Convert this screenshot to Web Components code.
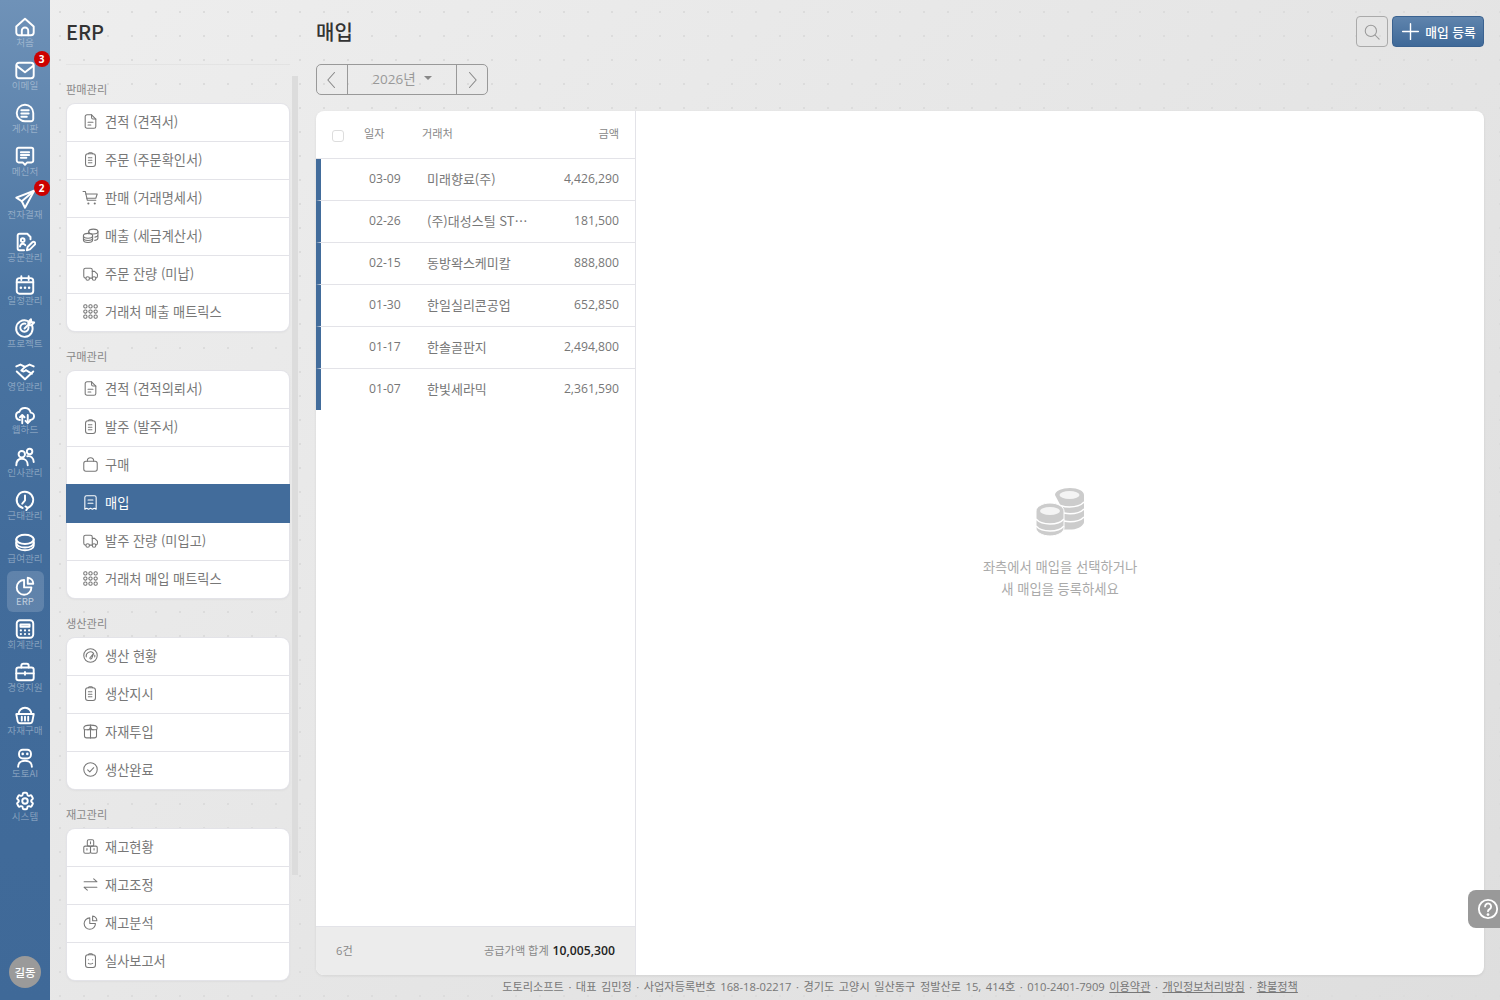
<!DOCTYPE html>
<html lang="ko">
<head>
<meta charset="utf-8">
<title>ERP 매입</title>
<style>
  html, body { margin: 0; height: 100%; overflow: hidden; }
  body {
    font-family: "Open Sans", "Noto Sans CJK KR", sans-serif;
    color: #777;
    background:
      radial-gradient(circle at 12px 12px, #dcdcdc 1px, transparent 1.5px) 0 0 / 24px 24px,
      linear-gradient(135deg, #eeeeee, #dedede);
  }
</style>
</head>
<body>
<erp-app>
  <nav-rail slot="rail">
    <rail-item icon="home" label="처음"></rail-item>
    <rail-item icon="mail" label="이메일" badge="3"></rail-item>
    <rail-item icon="board" label="게시판"></rail-item>
    <rail-item icon="msg" label="메신저"></rail-item>
    <rail-item icon="plane" label="전자결재" badge="2"></rail-item>
    <rail-item icon="docedit" label="공문관리"></rail-item>
    <rail-item icon="calendar" label="일정관리"></rail-item>
    <rail-item icon="target" label="프로젝트"></rail-item>
    <rail-item icon="handshake" label="영업관리"></rail-item>
    <rail-item icon="cloud" label="웹하드"></rail-item>
    <rail-item icon="users" label="인사관리"></rail-item>
    <rail-item icon="clock" label="근태관리"></rail-item>
    <rail-item icon="payroll" label="급여관리"></rail-item>
    <rail-item icon="pie" label="ERP" active></rail-item>
    <rail-item icon="calc" label="회계관리"></rail-item>
    <rail-item icon="briefcase" label="경영지원"></rail-item>
    <rail-item icon="basket" label="자재구매"></rail-item>
    <rail-item icon="robot" label="도토AI"></rail-item>
    <rail-item icon="gear" label="시스템"></rail-item>
  </nav-rail>

  <side-panel slot="panel" heading="ERP">
    <menu-group label="판매관리">
      <menu-item icon="doc">견적 (견적서)</menu-item>
      <menu-item icon="clip">주문 (주문확인서)</menu-item>
      <menu-item icon="cart">판매 (거래명세서)</menu-item>
      <menu-item icon="coins">매출 (세금계산서)</menu-item>
      <menu-item icon="truck">주문 잔량 (미납)</menu-item>
      <menu-item icon="grid">거래처 매출 매트릭스</menu-item>
    </menu-group>
    <menu-group label="구매관리">
      <menu-item icon="doc">견적 (견적의뢰서)</menu-item>
      <menu-item icon="clip">발주 (발주서)</menu-item>
      <menu-item icon="bag">구매</menu-item>
      <menu-item icon="receipt" active>매입</menu-item>
      <menu-item icon="truck">발주 잔량 (미입고)</menu-item>
      <menu-item icon="grid">거래처 매입 매트릭스</menu-item>
    </menu-group>
    <menu-group label="생산관리">
      <menu-item icon="gauge">생산 현황</menu-item>
      <menu-item icon="clip">생산지시</menu-item>
      <menu-item icon="box">자재투입</menu-item>
      <menu-item icon="check">생산완료</menu-item>
    </menu-group>
    <menu-group label="재고관리">
      <menu-item icon="stock">재고현황</menu-item>
      <menu-item icon="swap">재고조정</menu-item>
      <menu-item icon="pie">재고분석</menu-item>
      <menu-item icon="audit">실사보고서</menu-item>
    </menu-group>
  </side-panel>

  <page-head slot="main" heading="매입" action="매입 등록"></page-head>
  <year-nav slot="main" year="2026년"></year-nav>
  <split-view slot="main">
    <purchase-list slot="list" count="6건" total="10,005,300">
      <purchase-row date="03-09" name="미래향료(주)" amount="4,426,290"></purchase-row>
      <purchase-row date="02-26" name="(주)대성스틸 ST⋯" amount="181,500"></purchase-row>
      <purchase-row date="02-15" name="동방왁스케미칼" amount="888,800"></purchase-row>
      <purchase-row date="01-30" name="한일실리콘공업" amount="652,850"></purchase-row>
      <purchase-row date="01-17" name="한솔골판지" amount="2,494,800"></purchase-row>
      <purchase-row date="01-07" name="한빛세라믹" amount="2,361,590"></purchase-row>
    </purchase-list>
    <empty-detail slot="detail">좌측에서 매입을 선택하거나<br>새 매입을 등록하세요</empty-detail>
  </split-view>
  <site-footer slot="main"></site-footer>
  <help-tab slot="main"></help-tab>
</erp-app>

<script>
const ICONS = {
  home: '<path d="M2.500 11.500 12 3l9.500 8.500V18a3 3 0 0 1-3 3h-13a3 3 0 0 1-3-3z"/><path d="M8.500 21v-5a3.500 3.500 0 0 1 7 0v5"/>',
  mail: '<rect x="2.500" y="4" width="19" height="17" rx="3"/><path d="M3 7.500 12 14.500l9-7"/>',
  board: '<path d="M12 3a9 9 0 1 0 0 18h6.500a2.500 2.500 0 0 0 2.500-2.500V12a9 9 0 0 0-9-9z"/><path d="M8 9h8M8 12.500h8M8 16h6"/>',
  msg: '<path d="M5 3h14a2 2 0 0 1 2 2v12a2 2 0 0 1-2 2h-4.500L12 21.500 9.500 19H5a2 2 0 0 1-2-2V5a2 2 0 0 1 2-2z"/><path d="M7.500 8h9M7.500 11h9M7.500 14h6"/>',
  plane: '<path d="M22 3 2.500 10.500l6 4 3.500 7z"/><path d="M22 3 8.500 14.500"/>',
  docedit: '<path d="M18 9V6.500L14.500 3H6a2 2 0 0 0-2 2v14a2 2 0 0 0 2 2h5"/><circle cx="9.500" cy="10" r="2"/><path d="M6.500 17c.5-2 1.800-3 3-3 1 0 2 .5 2.800 1.500"/><path d="m14 21 .8-3.500 5.200-5.200a1.800 1.800 0 0 1 2.600 2.600l-5.200 5.200z"/>',
  calendar: '<rect x="3" y="4.500" width="18" height="17" rx="3"/><path d="M8 2.500v4M16 2.500v4M3 9h18"/><path d="M7.500 15h.01M12 15h.01M16.500 15h.01" stroke-width="2.800"/>',
  target: '<path d="M19.800 9.500A9 9 0 1 1 14.500 4.200"/><path d="M15.800 11a4.500 4.500 0 1 1-3.300-3.700"/><path d="m11.500 12.500 7-7M15.500 5.500 18.500 2.500l.5 3 3 .5-3 3h-3z"/>',
  handshake: '<path d="M2.500 7 7 5l5 2.500L17 5l4.500 2"/><path d="M12 7.500 8 11.500c1.800 1.500 3.500 1 5-.5l6.500 4"/><path d="M3 12.500 12 21l9-8.500"/>',
  cloud: '<path d="M6.500 18.500A4.500 4.500 0 0 1 5.800 9.600 6.500 6.500 0 0 1 18.200 10.500a4 4 0 0 1-.7 8"/><path d="M9 22v-9M6.500 15.500 9 13l2.500 2.500M15 13v9M12.500 19.500 15 22l2.500-2.500"/>',
  users: '<circle cx="8.500" cy="9" r="3.500"/><circle cx="17" cy="6" r="3"/><path d="M2.500 21c0-4.500 2.500-7 6-7s6.500 2.500 6.500 7"/><path d="M14.500 11.200c3.800-.7 7 1.800 7 6.300"/>',
  clock: '<path d="M9.500 20.700A9 9 0 1 1 15 20.500"/><path d="M12 7v5.500L9 16"/><path d="m12.500 19 2.500 1.500-1.500 2.500"/>',
  payroll: '<ellipse cx="12" cy="8" rx="9.500" ry="5"/><path d="M2.500 8v7c0 2.800 4.300 5 9.500 5s9.500-2.200 9.500-5V8"/><path d="M2.500 12c0 2.800 4.300 5 9.500 5s9.500-2.200 9.500-5"/>',
  pie: '<path d="M11 5.500a8 8 0 1 0 8 8h-8z"/><path d="M15 3a6.500 6.500 0 0 1 6 6.500h-6z"/>',
  calc: '<rect x="3" y="2.500" width="18" height="19" rx="3.500"/><path d="M7 7h10v2.500H7z"/><path d="M7.500 13.500h.01M12 13.500h.01M16.500 13.500h.01M7.500 17.500h.01M12 17.500h.01M16.500 17.500h.01" stroke-width="2.400"/>',
  briefcase: '<rect x="2.500" y="7" width="19" height="14" rx="2.500"/><path d="M8 7V5a2 2 0 0 1 2-2h4a2 2 0 0 1 2 2v2M2.500 13.500h19M12 12v3"/>',
  basket: '<path d="M5 11a7 7 0 0 1 14 0"/><path d="M2.500 11h19l-1.500 8a2.500 2.500 0 0 1-2.500 2h-11A2.500 2.500 0 0 1 4 19z"/><path d="M8.500 14v4M12 14v4M15.500 14v4"/>',
  robot: '<rect x="5.500" y="3" width="13" height="9.500" rx="4"/><path d="M9.500 7.500h.01M14.500 7.500h.01" stroke-width="2.800"/><path d="M4.500 21.500c0-4 3.200-6.500 7.500-6.500s7.500 2.500 7.500 6.500"/>',
  gear: '<path d="M9.594 3.940c.09-.542.56-.94 1.110-.94h2.593c.55 0 1.020.398 1.110.94l.213 1.281c.063.374.313.686.645.870.074.040.147.083.22.127.325.196.72.257 1.075.124l1.217-.456a1.125 1.125 0 0 1 1.370.49l1.296 2.247a1.125 1.125 0 0 1-.26 1.431l-1.003.827c-.293.241-.438.613-.43.992a7.723 7.723 0 0 1 0 .255c-.008.378.137.75.43.991l1.004.827c.424.35.534.955.26 1.430l-1.298 2.247a1.125 1.125 0 0 1-1.369.491l-1.217-.456c-.355-.133-.75-.072-1.076.124a6.470 6.470 0 0 1-.22.128c-.331.183-.581.495-.644.869l-.213 1.281c-.09.543-.56.94-1.110.94h-2.594c-.55 0-1.019-.398-1.110-.94l-.213-1.281c-.062-.374-.312-.686-.644-.87a6.520 6.520 0 0 1-.22-.127c-.325-.196-.72-.257-1.076-.124l-1.217.456a1.125 1.125 0 0 1-1.369-.49l-1.297-2.247a1.125 1.125 0 0 1 .26-1.431l1.004-.827c.292-.24.437-.613.43-.991a6.932 6.932 0 0 1 0-.255c.007-.38-.138-.751-.43-.992l-1.004-.827a1.125 1.125 0 0 1-.26-1.430l1.297-2.247a1.125 1.125 0 0 1 1.370-.491l1.216.456c.356.133.751.072 1.076-.124.072-.044.146-.086.22-.128.332-.183.582-.495.644-.869z"/><circle cx="12" cy="12" r="3"/>',
  doc: '<path d="M13.500 2.500H7A2.500 2.500 0 0 0 4.500 5v14A2.500 2.500 0 0 0 7 21.500h10a2.500 2.500 0 0 0 2.500-2.500V8.500z"/><path d="M13.500 2.500v4a2 2 0 0 0 2 2h4M8.500 13h7M8.500 17h4"/>',
  clip: '<rect x="5" y="4" width="14" height="18" rx="3.500"/><path d="M9 4a1.500 1.500 0 0 1 1.500-1.500h3A1.500 1.500 0 0 1 15 4"/><path d="M9 9.500h6M9 13h6M9 16.500h6" stroke-dasharray="2 1"/>',
  cart: '<path d="M1.500 3.500h3.200l2.800 12.500h12"/><path d="M5.300 7h16.200l-2 6H6.800"/><path d="M9 20.500h.01M18 20.500h.01" stroke-width="3"/>',
  coins: '<ellipse cx="16" cy="6.500" rx="6.500" ry="3.500"/><path d="M9.500 6.500v3M22.500 6.500v9c0 1.700-2 3-4.500 3.400M22.500 11c0 1.600-1.800 2.900-4.300 3.300"/><ellipse cx="8.500" cy="12.500" rx="6.500" ry="3.500"/><path d="M2 12.500v6c0 2 2.900 3.500 6.500 3.500s6.500-1.500 6.500-3.500v-6M2 15.500c0 2 2.900 3.500 6.500 3.500s6.500-1.500 6.500-3.500"/>',
  truck: '<path d="M5 18.500a2.500 2.500 0 0 1-2.500-2.500V7A2.500 2.500 0 0 1 5 4.500h7A2.500 2.500 0 0 1 14.500 7v11.500M10.500 18.500h4"/><path d="M14.500 9h3.300l4 4v3a2.500 2.500 0 0 1-2 2.400"/><circle cx="8" cy="19" r="2.500"/><circle cx="17" cy="19" r="2.500"/>',
  grid: '<g><rect x="2.500" y="2.500" width="4.500" height="4.500" rx="1.800"/><rect x="9.750" y="2.500" width="4.500" height="4.500" rx="1.800"/><rect x="17" y="2.500" width="4.500" height="4.500" rx="1.800"/><rect x="2.500" y="9.750" width="4.500" height="4.500" rx="1.800"/><rect x="9.750" y="9.750" width="4.500" height="4.500" rx="1.800"/><rect x="17" y="9.750" width="4.500" height="4.500" rx="1.800"/><rect x="2.500" y="17" width="4.500" height="4.500" rx="1.800"/><rect x="9.750" y="17" width="4.500" height="4.500" rx="1.800"/><rect x="17" y="17" width="4.500" height="4.500" rx="1.800"/></g>',
  bag: '<rect x="2.500" y="7.500" width="19" height="14" rx="3"/><path d="M7.500 7.500V7a4.500 4.500 0 0 1 9 0v.5"/>',
  receipt: '<path d="M6.500 2.500h11A2.500 2.500 0 0 1 20 5v16.500l-2.700-1.500-2.600 1.500-2.700-1.500-2.700 1.500L6.700 20 4 21.500V5a2.500 2.500 0 0 1 2.500-2.500z"/><path d="M8.500 8.500h7M8.500 13h7"/>',
  gauge: '<circle cx="12" cy="12" r="9.500"/><path d="M6 14a6 6 0 0 1 10-5.500"/><path d="M18 11.500a6 6 0 0 1 0 2.500M11 15.500 16.500 9l-3 7.500a1.500 1.500 0 0 1-2.500-1z"/>',
  box: '<path d="M3.500 9.500V18a3 3 0 0 0 3 3h11a3 3 0 0 0 3-3V9.500"/><path d="M12 3c-5 0-9.500 1.500-9.500 4 0 1.500 1 2.500 2.500 2.500h14c1.500 0 2.500-1 2.500-2.500 0-2.500-4.500-4-9.500-4z"/><path d="M12 3v18M8 9.500c2 0 4-2.500 4-6.500 0 4 2 6.500 4 6.500"/>',
  check: '<circle cx="12" cy="12" r="9.500"/><path d="m8 12.500 3 3 5.500-6"/>',
  stock: '<rect x="7.500" y="2.500" width="9" height="9" rx="2"/><rect x="2.500" y="11.500" width="9.500" height="10" rx="2"/><rect x="12" y="11.500" width="9.500" height="10" rx="2"/><path d="M12 5.500V8M7 15v2M17 15v2"/>',
  swap: '<path d="M3 8h18M16.500 4 21 8M21 16H3M7.500 20 3 16"/>',
  audit: '<rect x="5" y="4" width="14" height="18" rx="3.500"/><path d="M9 4a1.500 1.500 0 0 1 1.500-1.500h3A1.500 1.500 0 0 1 15 4M9 11h.01M15 11h.01M9 16c1.500 1 4.500 1 6 0"/>',
  search: '<circle cx="10.500" cy="10.500" r="7.500"/><path d="m16 16 5.500 5.500"/>',
  plus: '<path d="M12 3v18M3 12h18"/>',
  left: '<path d="M15 3 7 12l8 9"/>',
  right: '<path d="m9 3 8 9-8 9"/>',
  help: '<circle cx="12" cy="12" r="10"/><path d="M8.800 9.200a3.300 3.300 0 1 1 5 2.900c-1.200.7-1.800 1.300-1.800 2.400"/><path d="M12 18h.01" stroke-width="3"/>'
};

class UiIcon extends HTMLElement {
  connectedCallback() {
    const size = this.getAttribute("size") || 16;
    const weight = this.getAttribute("weight") || 1.6;
    this.attachShadow({ mode: "open" }).innerHTML = `
      <style>
        :host { display: inline-flex; width: ${size}px; height: ${size}px; flex: none; }
        svg { width: 100%; height: 100%; fill: none; stroke: currentColor; stroke-width: ${weight};
              stroke-linecap: round; stroke-linejoin: round; }
      </style>
      <svg viewBox="0 0 24 24">${ICONS[this.getAttribute("name")] || ""}</svg>`;
  }
}

class ErpApp extends HTMLElement {
  constructor() {
    super();
    this.attachShadow({ mode: "open" }).innerHTML = `
      <style>
        :host { display: grid; grid-template-columns: 50px 250px 1fr; height: 100vh; overflow: hidden; }
        main { display: flex; flex-direction: column; min-width: 0; padding: 0 16px; position: relative; height: 100vh; box-sizing: border-box; }
      </style>
      <slot name="rail"></slot>
      <slot name="panel"></slot>
      <main><slot name="main"></slot></main>`;
  }
}

class NavRail extends HTMLElement {
  constructor() {
    super();
    this.attachShadow({ mode: "open" }).innerHTML = `
      <style>
        :host {
          display: flex; flex-direction: column; align-items: center; gap: 2px;
          box-sizing: border-box; padding-top: 12px; height: 100vh; position: relative;
          background: linear-gradient(180deg, #6f92b8 0%, #4a74a1 30%, #426c9b 55%, #3f6998 100%);
        }
        .avatar {
          position: absolute; left: 9px; bottom: 12px; width: 32px; height: 32px; border-radius: 50%;
          background: #9a9a9a; color: #fff; font: 500 11.500px "Noto Sans CJK KR", sans-serif;
          display: flex; align-items: center; justify-content: center;
        }
      </style>
      <slot></slot>
      <div class="avatar">길동</div>`;
  }
}

class RailItem extends HTMLElement {
  connectedCallback() {
    const badge = this.getAttribute("badge");
    this.attachShadow({ mode: "open" }).innerHTML = `
      <style>
        :host {
          display: flex; flex-direction: column; align-items: center; position: relative;
          width: 37px; height: 41px; box-sizing: border-box; padding-top: 4px; border-radius: 6px; color: #fff;
        }
        :host([active]) { background: rgba(255,255,255,.16); }
        span.label {
          font: 400 9.600px/12px "Noto Sans CJK KR", sans-serif; color: rgba(255,255,255,.36);
          white-space: nowrap; margin-top: -2px;
        }
        :host([active]) span.label { color: rgba(255,255,255,.62); }
        .badge {
          position: absolute; top: -4px; right: -6px; width: 16px; height: 16px; border-radius: 50%;
          background: #cc0000; color: #fff; font: 700 10px/16px "Open Sans", sans-serif; text-align: center;
        }
      </style>
      <ui-icon name="${this.getAttribute("icon")}" size="22" weight="2.100"></ui-icon>
      <span class="label">${this.getAttribute("label")}</span>
      ${badge ? `<span class="badge">${badge}</span>` : ""}`;
  }
}

class SidePanel extends HTMLElement {
  connectedCallback() {
    this.attachShadow({ mode: "open" }).innerHTML = `
      <style>
        :host { display: flex; flex-direction: column; height: 100vh; position: relative; }
        h1 {
          margin: 0 10px 0 16px; height: 65px; box-sizing: border-box; padding-top: 18px;
          font: 500 20px/28px "Noto Sans CJK KR", sans-serif; color: #333;
          border-bottom: 1px solid rgba(0,0,0,.035);
        }
        .scroll { flex: 1; min-height: 0; overflow: hidden; padding: 16px 10px 0 16px; }
        .thumb { position: absolute; left: 242px; top: 76px; width: 6px; height: 799px; background: #dcdcdc; }
      </style>
      <h1>${this.getAttribute("heading")}</h1>
      <div class="scroll"><slot></slot></div>
      <div class="thumb"></div>`;
  }
}

class MenuGroup extends HTMLElement {
  connectedCallback() {
    this.attachShadow({ mode: "open" }).innerHTML = `
      <style>
        :host { display: block; margin-bottom: 17px; }
        .title { font: 400 11.200px/16px "Noto Sans CJK KR", sans-serif; color: #888; margin-bottom: 7px; height: 16px; }
        .card {
          margin: 0 1px; background: #fff; border-radius: 8px;
          box-shadow: 0 0 0 1px #e3e3e8, 0 1px 3px rgba(0,0,0,.08);
        }
      </style>
      <div class="title">${this.getAttribute("label")}</div>
      <div class="card"><slot></slot></div>`;
  }
}

class MenuItem extends HTMLElement {
  connectedCallback() {
    this.attachShadow({ mode: "open" }).innerHTML = `
      <style>
        :host {
          display: flex; align-items: center; gap: 6.500px; box-sizing: border-box; height: 38px; padding: 0 0 2px 14.500px;
          border-bottom: 1px solid #e3e3e8; color: #777; position: relative;
          font: 400 13.200px "Noto Sans CJK KR", sans-serif;
        }
        :host(:last-child) { border-bottom: 0; height: 37px; }
        :host([active]) {
          background: #426c9b; color: #fff; margin: -1px -1px 0; padding-left: 15.500px; height: 39px; border-bottom: 0; z-index: 1;
        }
      </style>
      <ui-icon name="${this.getAttribute("icon")}" size="17" weight="1.500"></ui-icon>
      <slot></slot>`;
  }
}

class PageHead extends HTMLElement {
  connectedCallback() {
    this.attachShadow({ mode: "open" }).innerHTML = `
      <style>
        :host { display: flex; align-items: center; gap: 4px; height: 31px; margin: 16px 0 17px; }
        h2 { margin: 0 auto 0 0; font: 500 20px/28px "Noto Sans CJK KR", sans-serif; color: #333; }
        button { box-sizing: border-box; height: 31px; border-radius: 4px; display: flex; align-items: center; justify-content: center; padding: 0; }
        .search { width: 32px; background: transparent; border: 1px solid #aaa; color: #999; }
        .add {
          width: 92px; gap: 4px; border: 1px solid #3a6290; color: #fff;
          background: linear-gradient(180deg, #5f84ad, #3f6998);
          font: 500 12.800px "Noto Sans CJK KR", sans-serif;
        }
      </style>
      <h2>${this.getAttribute("heading")}</h2>
      <button class="search"><ui-icon name="search" size="18" weight="1.400"></ui-icon></button>
      <button class="add"><ui-icon name="plus" size="21" weight="1.600"></ui-icon>${this.getAttribute("action")}</button>`;
  }
}

class YearNav extends HTMLElement {
  connectedCallback() {
    this.attachShadow({ mode: "open" }).innerHTML = `
      <style>
        :host {
          display: flex; align-self: flex-start; box-sizing: border-box; width: 172px; height: 31px; margin-bottom: 16px;
          border: 1px solid #999; border-radius: 5px; color: #888;
        }
        .arrow { width: 30px; flex: none; display: flex; align-items: center; justify-content: center; }
        .year {
          flex: 1; display: flex; align-items: center; justify-content: center; gap: 8px; padding-bottom: 4px;
          border-left: 1px solid #999; border-right: 1px solid #999;
          font: 400 13.500px "Open Sans", "Noto Sans CJK KR", sans-serif; color: #999;
        }
        .caret { width: 0; height: 0; border: 4px solid transparent; border-top-color: #888; border-bottom: 0; margin-top: 0; }
      </style>
      <div class="arrow"><ui-icon name="left" size="20" weight="1.300"></ui-icon></div>
      <div class="year">${this.getAttribute("year")}<span class="caret"></span></div>
      <div class="arrow"><ui-icon name="right" size="20" weight="1.300"></ui-icon></div>`;
  }
}

class SplitView extends HTMLElement {
  constructor() {
    super();
    this.attachShadow({ mode: "open" }).innerHTML = `
      <style>
        :host {
          display: grid; grid-template-columns: 320px 1fr; flex: none; height: 864px;
          border-radius: 8px; overflow: hidden; background: #fff; box-shadow: 0 1px 3px rgba(0,0,0,.08);
        }
      </style>
      <slot name="list"></slot><slot name="detail"></slot>`;
  }
}

class PurchaseList extends HTMLElement {
  connectedCallback() {
    this.attachShadow({ mode: "open" }).innerHTML = `
      <style>
        :host { display: flex; flex-direction: column; border-right: 1px solid #e3e3e8; min-height: 0; }
        .head {
          display: grid; grid-template-columns: 32px 58px 1fr auto; align-items: center; height: 48px;
          box-sizing: border-box; padding: 0 16px; border-bottom: 1px solid #e3e3e8; color: #888;
          font: 400 11.200px "Noto Sans CJK KR", sans-serif;
        }
        .head span { margin-top: -4px; }
        .box { width: 12px; height: 12px; margin-top: 3px; box-sizing: border-box; border: 1px solid #ddd; border-radius: 3px; }
        .rows { flex: 1; }
        .foot {
          display: flex; justify-content: space-between; align-items: center; height: 49px; box-sizing: border-box;
          padding: 0 20px 2px; background: #ececec; border-top: 1px solid #e3e3e8; color: #888;
          font: 400 11.200px "Open Sans", "Noto Sans CJK KR", sans-serif;
        }
        .foot b { color: #222; font-weight: 600; font-size: 12.200px; margin-left: 1px; }
      </style>
      <div class="head"><div class="box"></div><span>일자</span><span>거래처</span><span>금액</span></div>
      <div class="rows"><slot></slot></div>
      <div class="foot"><span>${this.getAttribute("count")}</span><span>공급가액 합계 <b>${this.getAttribute("total")}</b></span></div>`;
  }
}

class PurchaseRow extends HTMLElement {
  connectedCallback() {
    this.attachShadow({ mode: "open" }).innerHTML = `
      <style>
        :host {
          display: grid; grid-template-columns: 58px 102px 1fr; align-items: center; box-sizing: border-box; height: 42px;
          padding: 0 16px 0 48px; border-left: 5px solid #426c9b; border-bottom: 1px solid #e3e3e8;
          color: #777; font: 400 12.200px "Open Sans", "Noto Sans CJK KR", sans-serif;
        }
        :host(:last-child) { border-bottom: 0; height: 41px; }
        span { padding-bottom: 2px; }
        .name { font: 400 13px "Noto Sans CJK KR", sans-serif; white-space: nowrap; }
        .amount { text-align: right; }
      </style>
      <span>${this.getAttribute("date")}</span>
      <span class="name">${this.getAttribute("name")}</span>
      <span class="amount">${this.getAttribute("amount")}</span>`;
  }
}

class EmptyDetail extends HTMLElement {
  constructor() {
    super();
    this.attachShadow({ mode: "open" }).innerHTML = `
      <style>
        :host {
          display: flex; flex-direction: column; align-items: center; justify-content: center; text-align: center;
          color: #aaa; font: 400 13.300px/22px "Noto Sans CJK KR", sans-serif; padding-top: 1px;
        }
        svg { width: 48px; height: 48px; margin-bottom: 20px; }
      </style>
      <svg viewBox="0 0 48 48">
        <path fill="#ccc" d="M19 7c0-4 7-7 15-7s14 3 14 7v27c0 3-5 7-12 7.500H28V24z"/>
        <ellipse cx="33.500" cy="7" rx="10" ry="4" fill="#f4f4f4"/>
        <path d="M19.500 14c3 3.500 8 5 14 5s11.500-1.500 14.500-5M28 25c2 .5 4 .8 6 .8 6 0 11-1.500 14-4.800M28 33c2 .5 4 .8 6 .8 6 0 11-1.500 14-4.800" fill="none" stroke="#fff" stroke-width="1.400"/>
        <path fill="#ccc" stroke="#fff" stroke-width="1" d="M0 23c0-4 6-8 14-8s14 4 14 8v17c0 4-6 8-14 8S0 44 0 40z"/>
        <ellipse cx="14" cy="23" rx="10" ry="4" fill="#f4f4f4"/>
        <path d="M0 31c3 3.500 8 5 14 5s11-1.500 14-5M0 38c3 3.500 8 5 14 5s11-1.500 14-5" fill="none" stroke="#fff" stroke-width="1.400"/>
      </svg>
      <div><slot></slot></div>`;
  }
}

class SiteFooter extends HTMLElement {
  constructor() {
    super();
    this.attachShadow({ mode: "open" }).innerHTML = `
      <style>
        :host {
          display: block; text-align: center; white-space: nowrap; margin-top: 3px;
          font: 400 11.200px/17px "Open Sans", "Noto Sans CJK KR", sans-serif; color: #777; word-spacing: 1.600px;
        }
        a { color: inherit; text-decoration: underline; }
      </style>
      도토리소프트 · 대표 김민정 · 사업자등록번호 168-18-02217 · 경기도 고양시 일산동구 정발산로 15, 414호 · 010-2401-7909
      <a>이용약관</a> · <a>개인정보처리방침</a> · <a>환불정책</a>`;
  }
}

class HelpTab extends HTMLElement {
  constructor() {
    super();
    this.attachShadow({ mode: "open" }).innerHTML = `
      <style>
        :host {
          position: absolute; right: 0; top: 890px; width: 32px; height: 38px; box-sizing: border-box; padding-left: 9px;
          display: flex; align-items: center; background: #999; color: #fff; border-radius: 8px 0 0 8px;
        }
      </style>
      <ui-icon name="help" size="22" weight="2"></ui-icon>`;
  }
}

customElements.define("ui-icon", UiIcon);
customElements.define("erp-app", ErpApp);
customElements.define("nav-rail", NavRail);
customElements.define("rail-item", RailItem);
customElements.define("side-panel", SidePanel);
customElements.define("menu-group", MenuGroup);
customElements.define("menu-item", MenuItem);
customElements.define("page-head", PageHead);
customElements.define("year-nav", YearNav);
customElements.define("split-view", SplitView);
customElements.define("purchase-list", PurchaseList);
customElements.define("purchase-row", PurchaseRow);
customElements.define("empty-detail", EmptyDetail);
customElements.define("site-footer", SiteFooter);
customElements.define("help-tab", HelpTab);
</script>
</body>
</html>
